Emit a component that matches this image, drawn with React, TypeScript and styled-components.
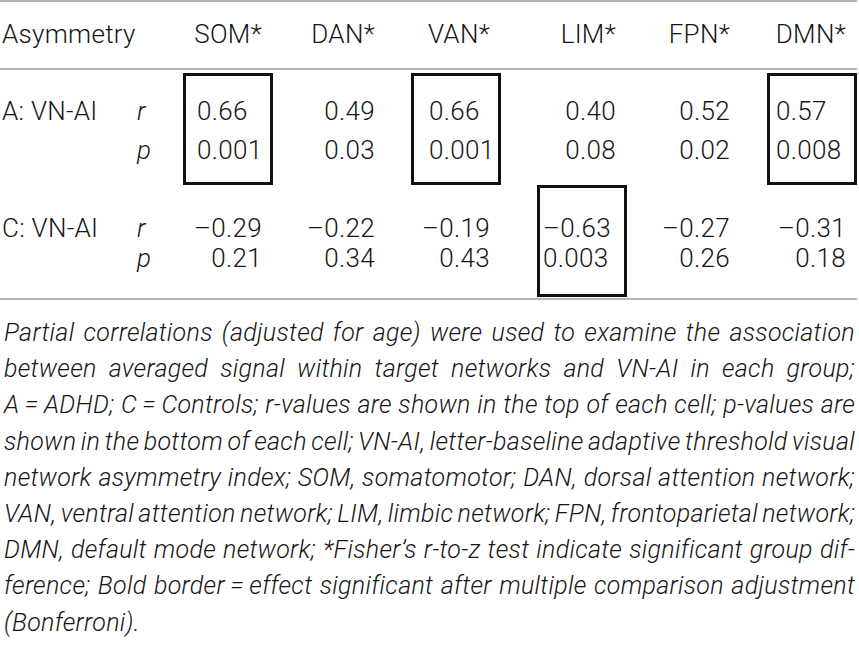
import React from 'react'
import styled, { createGlobalStyle } from 'styled-components'

const GlobalStyle = createGlobalStyle`
  html, body {
    margin: 0;
    padding: 0;
    background: #fff;
  }
  body {
    font-family: Roboto, 'Liberation Sans', Arial, sans-serif;
    font-weight: 300;
    color: #161616;
  }
`

const Page = styled.div`
  width: 857px;
`

const Table = styled.div`
  display: grid;
  grid-template-columns: 133px 50px 90px 113px 115px 126px 114px 116px;
  grid-template-rows: 68px 115px 112px;
  align-items: end;
  border-top: 2px solid #b5b5b5;
  border-bottom: 2px solid #b5b5b5;
  padding-bottom: 1px;
  font-size: 26px;
  letter-spacing: 0.3px;
`

const HeadCell = styled.div<{ $span?: number; $right?: boolean }>`
  grid-column: span ${p => p.$span || 1};
  height: 68px;
  box-sizing: border-box;
  display: flex;
  align-items: center;
  justify-content: ${p => (p.$right ? 'flex-end' : 'flex-start')};
  padding: 0 ${p => (p.$right ? '11px' : '0')} 3px ${p => (p.$right ? '0' : '2px')};
  border-bottom: 2px solid #b5b5b5;
  white-space: nowrap;
`

const Lines = styled.div<{ $lh: number; $pt: number }>`
  height: 112px;
  box-sizing: border-box;
  display: flex;
  flex-direction: column;
  padding-top: ${p => p.$pt}px;
  line-height: ${p => p.$lh}px;
  white-space: nowrap;
`

const GroupLabel = styled(Lines)`
  padding-left: 2px;
`

const StatLabel = styled(Lines)`
  padding-left: 4px;
  font-style: italic;
`

const Slot = styled(Lines)<{ $boxed?: boolean; $inset?: number }>`
  justify-self: end;
  width: 90px;
  align-items: ${p => (p.$boxed ? 'flex-start' : 'flex-end')};
  padding-top: ${p => (p.$boxed ? p.$pt - 3 : p.$pt)}px;
  padding-right: ${p => (p.$boxed ? 0 : 11)}px;
  padding-left: ${p => (p.$boxed ? p.$inset || 0 : 0)}px;
  border: ${p => (p.$boxed ? '3px solid #111' : 'none')};
`

const Note = styled.div`
  padding: 15px 2px 0 4px;
  font-style: italic;
  font-size: 25px;
  letter-spacing: 0.3px;
  word-spacing: -2px;
  line-height: 36.2px;
`

const NoteLine = styled.div<{ $last?: boolean }>`
  text-align: justify;
  text-align-last: ${p => (p.$last ? 'left' : 'justify')};
  white-space: nowrap;
`

type Cell = { r: string; p: string; box?: number }
type Group = { label: string; lh: number; pt: number; cells: Cell[] }

const networks = ['SOM*', 'DAN*', 'VAN*', 'LIM*', 'FPN*', 'DMN*']

const groups: Group[] = [
  {
    label: 'A: VN-AI',
    lh: 39,
    pt: 19,
    cells: [
      { r: '0.66', p: '0.001', box: 11 },
      { r: '0.49', p: '0.03' },
      { r: '0.66', p: '0.001', box: 15 },
      { r: '0.40', p: '0.08' },
      { r: '0.52', p: '0.02' },
      { r: '0.57', p: '0.008', box: 6 },
    ],
  },
  {
    label: 'C: VN-AI',
    lh: 30,
    pt: 28,
    cells: [
      { r: '–0.29', p: '0.21' },
      { r: '–0.22', p: '0.34' },
      { r: '–0.19', p: '0.43' },
      { r: '–0.63', p: '0.003', box: 3 },
      { r: '–0.27', p: '0.26' },
      { r: '–0.31', p: '0.18' },
    ],
  },
]

const note = [
  'Partial correlations (adjusted for age) were used to examine the association',
  'between averaged signal within target networks and VN-AI in each group;',
  'A\u2009=\u2009ADHD; C\u2009=\u2009Controls; r-values are shown in the top of each cell; p-values are',
  'shown in the bottom of each cell; VN-AI, letter-baseline adaptive threshold visual',
  'network asymmetry index; SOM, somatomotor; DAN, dorsal attention network;',
  'VAN, ventral attention network; LIM, limbic network; FPN, frontoparietal network;',
  'DMN, default mode network; *Fisher’s r-to-z test indicate significant group dif-',
  'ference; Bold border\u2009=\u2009effect significant after multiple comparison adjustment',
  '(Bonferroni).',
]

export default function App() {
  return (
    <Page>
      <GlobalStyle />
      <Table>
        <HeadCell $span={2}>Asymmetry</HeadCell>
        {networks.map(n => (
          <HeadCell key={n} $right>
            {n}
          </HeadCell>
        ))}
        {groups.map(g => (
          <React.Fragment key={g.label}>
            <GroupLabel $lh={g.lh} $pt={g.pt}>
              <span>{g.label}</span>
            </GroupLabel>
            <StatLabel $lh={g.lh} $pt={g.pt}>
              <span>r</span>
              <span>p</span>
            </StatLabel>
            {g.cells.map((c, i) => (
              <Slot key={i} $lh={g.lh} $pt={g.pt} $boxed={c.box !== undefined} $inset={c.box}>
                <span>{c.r}</span>
                <span>{c.p}</span>
              </Slot>
            ))}
          </React.Fragment>
        ))}
      </Table>
      <Note>
        {note.map((line, i) => (
          <NoteLine key={i} $last={i === note.length - 1}>
            {line}
          </NoteLine>
        ))}
      </Note>
    </Page>
  )
}
